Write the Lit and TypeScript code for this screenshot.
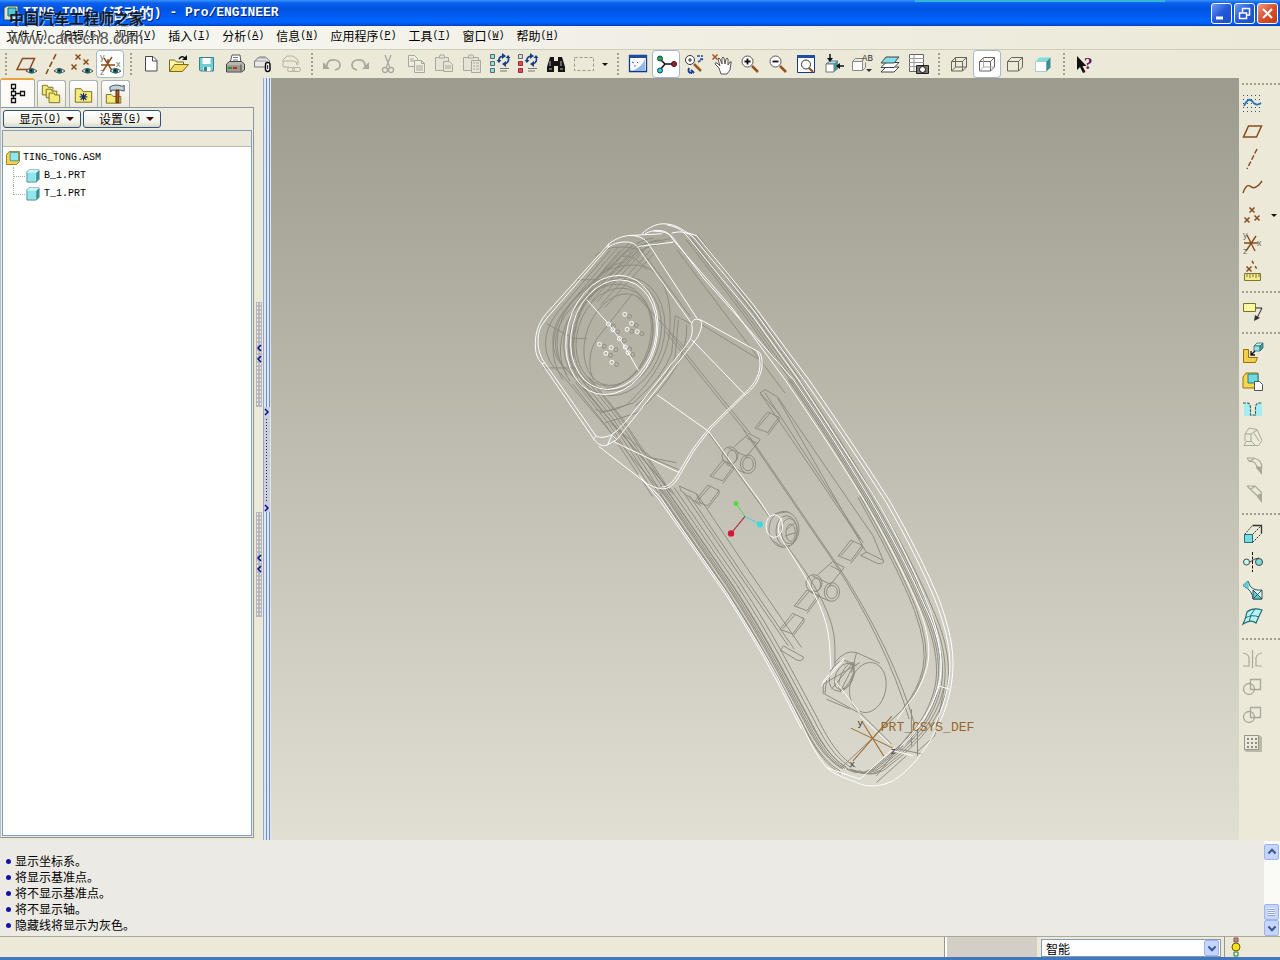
import { LitElement, html, css, svg } from "lit";
import { customElement, property } from "lit/decorators.js";
import { classMap } from "lit/directives/class-map.js";

const eye = svg`<g><path d="M14 21q5-5 11 0q-5 4-11 0z" fill="#dfe9e6" stroke="#59514a" stroke-width="1"/><circle cx="19.5" cy="20.8" r="2.6" fill="#17686c"/><circle cx="19.2" cy="20.4" r="1" fill="#012"/></g>`;
const cross = (x: number, y: number, c = "#8a4b1c") =>
  svg`<path d="M${x - 2.5} ${y - 2.5}l5 5m0-5l-5 5" stroke=${c} stroke-width="1.5" fill="none"/>`;
const cube = (x: number, y: number, s: number) =>
  svg`<g stroke="#35666c" stroke-width=".8"><path d="M${x} ${y + 3}l3-3h${s}l-3 3z" fill="#c4f6f8"/><path d="M${x} ${y + 3}h${s}v${s - 1}h-${s}z" fill="#8fe6ec"/><path d="M${x + s} ${y + 3}l3-3v${s - 1}l-3 3z" fill="#3f9da6"/></g>`;
const wireCube = svg`<path d="M6.500 11.500h11v9.500h-11zM6.500 11.500l4-4h11l-4 4M21.500 7.500v9.500l-4 4"/>`;
const sparkArrows = svg`<path d="M13 12q-1-5 4-6M22 7q2 5-3 7" fill="none" stroke="#16408c" stroke-width="1.600"/><path d="M16 3l4 3-4 3zM20 11l-4 3 4 3zM10.500 10h5l-2.500 3zM19.500 8h5l-2.500-3z" fill="#16408c"/><path d="M14 18.500h9M14 21h7" stroke="#777"/>`;

const icons: Record<string, unknown> = {
  planes: svg`<path d="M10.500 8.500h12l-5 11H5z" fill="none" stroke="#8a4b1c" stroke-width="1.500"/>${eye}`,
  axes: svg`<path d="M16 4L6 24" fill="none" stroke="#8a4b1c" stroke-width="1.600" stroke-dasharray="6 2.500"/>${eye}`,
  points: svg`${cross(10, 7)}${cross(18, 12)}${cross(6, 17)}${eye}`,
  csys: svg`<path d="M5 15h14M8 8l9 14M16 7L7 21M12 15v-6" fill="none" stroke="#8a4b1c" stroke-width="1.400"/><text x="4" y="10" font-size="9" class="g">y</text><text x="20" y="17" font-size="9" class="g">x</text><text x="4" y="25" font-size="9" class="g">z</text>${eye}`,
  new: svg`<path d="M8.500 6.500h7.500l4 4v10.500h-11.500z" fill="#fff" stroke="#4a4a4a"/><path d="M15.500 6.500v4.500h4.500" fill="none" stroke="#4a4a4a"/>`,
  open: svg`<path d="M4.500 21v-11h5l2 2h7v3" fill="#fff6a8" stroke="#776a21"/><path d="M4.500 21.500l5-7h14l-6 7z" fill="#f4dc62" stroke="#776a21"/><path d="M14 9q3-4 6-1" fill="none" stroke="#111" stroke-width="1.500"/><path d="M22 5v5h-5z" fill="#111"/>`,
  save: svg`<path d="M6.500 7.500h14v13.500h-13l-1-1z" fill="#6fcfd4" stroke="#3d8087"/><path d="M9.500 8h8v6h-8zM10.500 17h7v4h-7z" fill="#fff"/><path d="M11 17h3v4h-3z" fill="#3d8087"/>`,
  print: svg`<path d="M9 13l2-8h8l1 8z" fill="#fff" stroke="#555"/><path d="M12 7.500h5M12 10h5" stroke="#777"/><path d="M5.500 14l3-2.500h12l3 2.500v6l-3 2H5.500z" fill="#b9b8b0" stroke="#444"/><path d="M6 15h14v6H6z" fill="#9c9b96"/><path d="M7 18h4" stroke="#19a02a" stroke-width="2"/><path d="M12 18h4" stroke="#c22" stroke-width="2"/><path d="M20 14.500v7" stroke="#444"/>`,
  mail: svg`<path d="M5.500 17v-6l5-4h6l4 4v6z" fill="#e9e9e9" stroke="#777"/><path d="M6 11h11q3 0 3 4v2M8 8h9" fill="none" stroke="#999"/><rect x="16.500" y="12.500" width="4.500" height="9" rx="2.200" fill="#fff" stroke="#111" stroke-width="1.500"/><path d="M18.700 15v4" stroke="#111"/>`,
  mailLink: svg`<g fill="none" stroke="#b3b0a4"><path d="M6 17v-7l4-4h6l5 4v5M6 17h6M6 11h11q3 0 3 4"/><rect x="10.500" y="17.500" width="7" height="4" rx="2"/><rect x="15.500" y="17.500" width="8" height="4" rx="2"/></g>`,
  undo: svg`<path d="M9 16q0-7 8-6q5 1 5 5t-5 5" fill="none" stroke="#aaa89c" stroke-width="1.700"/><path d="M5 12v7h7z" fill="#aaa89c"/>`,
  redo: svg`<path d="M19 16q0-7-8-6q-5 1-5 5t5 5" fill="none" stroke="#aaa89c" stroke-width="1.700"/><path d="M23 12v7h-7z" fill="#aaa89c"/>`,
  cut: svg`<g fill="none" stroke="#aaa89c" stroke-width="1.300"><path d="M11 5l5 13M17 5l-5 13"/><circle cx="11" cy="20" r="2.500"/><circle cx="17" cy="20" r="2.500"/></g>`,
  copy: svg`<g fill="#efede1" stroke="#aaa89c"><path d="M6.500 5.500h6l3 3v8h-9z"/><path d="M12.500 10.500h7l3 3v9h-10zM19.500 10.500v3h3M14 16h7M14 18h7M14 20h7M8 9h4M8 11h4"/></g>`,
  paste: svg`<g fill="#e7e4d7" stroke="#aaa89c"><path d="M5.500 7.500h13v13h-13z"/><path d="M9 8l1-3h4l1 3z"/><path d="M13.500 11.500h6l3 3v7h-9zM15 16h6M15 18h6"/></g>`,
  pasteSpecial: svg`<g fill="#e7e4d7" stroke="#aaa89c"><path d="M5.500 7.500h15v13h-15z"/><path d="M10 8l1-3h4l1 3z"/><path d="M13.500 10.500h9v12h-9zM15 13h2M18 13h3M15 16h2M18 16h3M15 19h2M18 19h3"/></g>`,
  regen: svg`<g fill="#8de2df" stroke="#567"><path d="M4.500 4.500h4v4h-4zM4.500 11.500h4v4h-4zM4.500 18.500h4v4h-4z"/></g>${sparkArrows}`,
  regenAll: svg`<path d="M4.500 4.500h4v4h-4z" fill="#ddd" stroke="#666"/><path d="M4.500 11.500h4v4h-4zM4.500 18.500h4v4h-4z" fill="#e04a4a" stroke="#834"/>${sparkArrows}`,
  find: svg`<path d="M8 7h4v4h4V7h4l3 10v5h-7v-6h-4v6H5v-5z" fill="#151515"/><path d="M8 11v5M19 11v5M7 19h3M18 19h3" stroke="#bbb"/>`,
  select: svg`<rect x="4.500" y="7.500" width="19" height="13" fill="none" stroke="#999789" stroke-dasharray="3 2"/>`,
  refresh: svg`<path d="M5.500 5.500h17v16h-17z" fill="#fff" stroke="#123a86" stroke-width="1.300"/><path d="M5 5h18v3H5z" fill="#1d4fa0"/><path d="M8 21Q18 17 21 9v12z" fill="#8eb9ea"/><path d="M8 12l2 1M10 16l2 0M13 12l2 2" stroke="#2b5cad"/><path d="M12 17l7-7" stroke="#fff" stroke-width="2"/>`,
  spin: svg`<path d="M8 9l5 5h11M13 14l-5 6" fill="none" stroke="#111" stroke-width="1.500"/><circle cx="8" cy="8.500" r="2.500" fill="#27a844" stroke="#145"/><circle cx="22" cy="14" r="2.500" fill="#9d1f25" stroke="#411"/><circle cx="8" cy="20.500" r="2.500" fill="#34c5d4" stroke="#145"/>`,
  orient: svg`<circle cx="10" cy="10" r="4.500" fill="#fff" stroke="#333"/><path d="M10 8v4M8 10h4" stroke="#333"/><path d="M14 14l7 7" stroke="#9a5726" stroke-width="2.500"/><path d="M17 6h6M20 9h4M18 12l5-3" stroke="#1e4e9c" stroke-dasharray="3 1" stroke-width="1.500"/><path d="M9 18q-2 5 3 5m-1-3l3 3" fill="none" stroke="#1c3c9c" stroke-width="2"/>`,
  pan: svg`${cross(7, 7, "#a35624")}<path d="M11 18l-4-4q0-2 2-1l3 3-2-7q1-2 2 0l2 5V8q1-2 2 0l1 6 1-5q1-2 2 0l0 6 2-3q2-1 1 1l-1 7-3 4h-6z" fill="#fff" stroke="#444" stroke-width=".9"/>`,
  zoomIn: svg`<circle cx="11.500" cy="11.500" r="5.500" fill="#fff" stroke="#555"/><path d="M11.500 8.500v6M8.500 11.500h6" stroke="#111" stroke-width="1.800"/><path d="M16 16l6 6" stroke="#96501e" stroke-width="2.500"/>`,
  zoomOut: svg`<circle cx="11.500" cy="11.500" r="5.500" fill="#fff" stroke="#555"/><path d="M8.500 11.500h6" stroke="#111" stroke-width="1.800"/><path d="M16 16l6 6" stroke="#96501e" stroke-width="2.500"/>`,
  refit: svg`<path d="M5.500 5.500h17v17h-17z" fill="#fff" stroke="#123a86"/><path d="M5 5h18v3H5z" fill="#1d4fa0"/><circle cx="14" cy="14.500" r="4.500" fill="#fff" stroke="#333"/><path d="M17 18l4 4" stroke="#96501e" stroke-width="2.300"/>`,
  reorient: svg`<path d="M6 14l4-3h8l-4 3z" fill="#a4e6ea" stroke="#679"/><path d="M6 14h8v8H6z" fill="#fff" stroke="#777"/><path d="M14 14l4-3v8l-4 3z" fill="#4c949b"/><path d="M10 4v4M24 16h-5" stroke="#111" stroke-width="1.500"/><path d="M7 8h6l-3 4zM20 13v6l-4-3z" fill="#111"/>`,
  saved: svg`<path d="M4.500 11.500h10v9h-10z" fill="#fff" stroke="#888"/><path d="M4.500 11.500l3-3h8M14.500 20.500l3-3v-5" fill="none" stroke="#888"/><text x="14" y="11" font-size="9" class="m">AB</text><path d="M18 19h6l-3 3z" fill="#333"/>`,
  layers: svg`<g stroke="#444" stroke-width="1"><path d="M5 22l5-5h13l-5 5z" fill="#fff"/><path d="M5 17.500l5-5h13l-5 5z" fill="#fff"/><path d="M5 13l5-6h13l-5 6z" fill="#7ee0e6"/></g>`,
  viewMgr: svg`<path d="M5.500 4.500h14v17h-14z" fill="#fff" stroke="#666"/><path d="M5 8.500h15M5 12.500h15M5 16.500h15M10 5v16" stroke="#999"/><path d="M12.500 15.500h12v8h-12z" fill="#77756c" stroke="#222"/><circle cx="18.500" cy="19.500" r="3" fill="#fff" stroke="#111"/>`,
  wire: svg`<g fill="none" stroke="#66645c">${wireCube}<path d="M10.500 7.500v9.500h11M10.500 17l-4 4"/></g>`,
  hidden: svg`<g fill="none" stroke="#66645c">${wireCube}<path d="M10.500 7.500v9.500h11M10.500 17l-4 4" stroke="#aaa"/></g>`,
  noHidden: svg`<g fill="none" stroke="#66645c">${wireCube}</g>`,
  shaded: svg`<path d="M6.500 11.500l4-4h11l-4 4z" fill="#7be0e2"/><path d="M6.500 11.500h11v10h-11z" fill="#fff" stroke="#aacdd0"/><path d="M17.500 11.500l4-4v10l-4 4z" fill="#3d8d92"/>`,
  help: svg`<path d="M7 6v14l3-3 3 6 2.500-1-3-6h4z" fill="#111"/><text x="14" y="19" font-size="17" font-weight="700" fill="#5d1660" font-family="Liberation Serif">?</text>`,
  sketch: svg`<g fill="#334f7c">${[6, 10, 14, 18, 22].map((y) => [4, 8, 12, 16, 20].map((x) => svg`<rect x=${x} y=${y} width="1" height="1"/>`))}</g><path d="M5 17q4-9 8-5q4 6 9 2" fill="none" stroke="#2474b8" stroke-width="1.800"/>`,
  plane: svg`<path d="M9.500 9h13l-5 11H4.500z" fill="none" stroke="#8a4b1c" stroke-width="1.500"/>`,
  axis: svg`<path d="M18 4L8 24" fill="none" stroke="#8a4b1c" stroke-width="1.500" stroke-dasharray="5 2"/>`,
  curve: svg`<path d="M4 20q3-9 7-7q5 5 12-5" fill="none" stroke="#8a4b1c" stroke-width="1.400"/>`,
  point: svg`${cross(13, 9)}${cross(8, 19)}${cross(18, 17)}`,
  csys2: svg`<path d="M5 14h14M8 6l8 16M17 7L7 22" fill="none" stroke="#8a4b1c" stroke-width="1.400"/><text x="4" y="9" font-size="9" class="g">y</text><text x="18" y="17" font-size="9" class="g">x</text><text x="4" y="25" font-size="9" class="g">z</text>`,
  analysis: svg`${cross(10, 12)}<path d="M13 4l6 10" stroke="#8a4b1c" stroke-width="1.500" stroke-dasharray="3 3"/><path d="M5.500 16.500h16v7h-16z" fill="#f5ed8d" stroke="#7c7637"/><path d="M8 17v3M11 17v4M14 17v3M17 17v4M20 17v3" stroke="#7c7637"/>`,
  note: svg`<path d="M4.500 5.500h12v8h-12z" fill="#fbf8a4" stroke="#75732c"/><path d="M17 10h6l-5 10" fill="none" stroke="#222"/><path d="M15 23l1-6 5 3z" fill="#333"/>`,
  assemble: svg`<path d="M4.500 10.500h5v8h9l-2 5h-12z" fill="#f3cf49" stroke="#927110"/>${cube(15, 4, 6)}<path d="M16 12l-4 4m0-4v4h4" fill="none" stroke="#111" stroke-width="1.300"/>`,
  create: svg`<path d="M4 10l3-4h12v12l-3 3H4z" fill="#f6d64f" stroke="#927110"/><path d="M9 7h10v9H9z" fill="#6cdbe0" stroke="#2b7d85"/><path d="M15.500 14.500h5l3 3v6h-8z" fill="#fff" stroke="#555"/>`,
  hole: svg`<path d="M5 8h5l2 4v8h4v-8l2-4h5v13H5z" fill="#a4edf4"/><path d="M4 8h5q2.500 1 2.500 5v7h5v-7q0-4 2.500-5h4" fill="none" stroke="#455" stroke-width="1.100" stroke-dasharray="3 1"/>`,
  shell: svg`<path d="M6 11l4-6 8 1.500 5 11-3.500 5H5l2-4h6M6 11h6v7M6 11v7M12 11l6-4M12 18l4 4M15 10l5 8" fill="none" stroke="#aaa89c"/>`,
  round: svg`<path d="M8 7h6.500q8 1.500 8.500 9.500M10.500 10.500q7-1 7.500 7.500M8 7l2.500 3.500L16 7" fill="none" stroke="#aaa89c" stroke-width="1.200"/><path d="M18 15l5 1v8l-5-6z" fill="#aaa89c"/>`,
  chamfer: svg`<path d="M8 7h8l7 7M8 7l3.500 3.500 6.500 6M11.500 10.500L16 7" fill="none" stroke="#aaa89c" stroke-width="1.200"/><path d="M18 16l5-2v10l-5-6z" fill="#aaa89c"/>`,
  extrude: svg`<path d="M5.500 14.500h8v8h-8z" fill="#73dde2" stroke="#26727a"/><path d="M5.500 14.500l8-9M13.500 14.500l9-9M13.500 22.500l9-9" fill="none" stroke="#333" stroke-dasharray="2 1"/><path d="M13.500 5.500h9v8" fill="none" stroke="#333" stroke-width="1.300"/>`,
  revolve: svg`<circle cx="7.500" cy="14" r="3" fill="#c8f7f9" stroke="#444"/><circle cx="20" cy="14" r="3.500" fill="#73dde2" stroke="#444"/><path d="M13.500 4v20" stroke="#111" stroke-dasharray="3 1.500"/><path d="M11 14l5-3 4-1" fill="none" stroke="#444"/>`,
  sweep: svg`<path d="M4 9.500l5-4.500 2 5q4 5 12 4v9H14q0-8-10-13.500z" fill="#dff3f4" stroke="#355"/><path d="M14 14l9 9h-9z" fill="#5ccfd8" stroke="#355"/><path d="M4 9.500L9 5l1 8z" fill="#5ccfd8"/><path d="M23 14l-9 9" stroke="#355"/>`,
  boundary: svg`<path d="M4 20q3-6 4-12 6-5 15-2-3 6-6 13-5-4-13 1z" fill="#b5f3f6" stroke="#256c75" stroke-width="1.200"/><path d="M6 14q7-4 14-1M16 5q-5 5-6 13" fill="none" stroke="#256c75"/>`,
  mirror: svg`<path d="M13.500 5v18M4 8q7 1 6 8v5H4M23 8q-7 1-6 8v5h6" fill="none" stroke="#aaa89c" stroke-width="1.200"/>`,
  merge: svg`<g fill="none" stroke="#aaa89c" stroke-width="1.300"><path d="M11.500 6.500h10v10h-10z"/><circle cx="10" cy="16" r="5.500"/></g>`,
  pattern: svg`<path d="M5 6h15l3 2v15H7l-2-2z" fill="#bbb8ab"/><path d="M5.500 6.500h14v14h-14z" fill="#ebe8dc" stroke="#99978a"/><g fill="#8e8c81">${[9, 13, 17].map((y) => [8, 12, 16].map((x) => svg`<rect x=${x} y=${y} width="2" height="2"/>`))}</g>`,
  tree: svg`<g fill="#fff" stroke="#111" stroke-width="1.300"><path d="M9.500 7v14M9.500 13.500h8"/><path d="M7.500 4.500h4v4h-4zM7.500 11.500h4v4h-4zM7.500 18.500h4v4h-4zM16.500 11.500h4v4h-4z"/></g>`,
  folders: svg`<g fill="#f6eb79" stroke="#77702a"><path d="M4.500 15v-10h5l1 2h5v8z"/><path d="M8.500 18v-9h5l1 2h5v7z"/><path d="M11.500 23v-10h5l1 2h5v8z"/></g>`,
  favorites: svg`<path d="M5.500 22.500v-14h6l2 3h9v11z" fill="#f6eb79" stroke="#77702a"/><path d="M14 13v8M10 17h8M11 14l6 6M17 14l-6 6" stroke="#15306f" stroke-width="1.200"/>`,
  utils: svg`<path d="M4.500 23.500v-9h5l2 2h8v7z" fill="#f6eb79" stroke="#77702a"/><path d="M8 7q5-4 13-1l2-1v6l-4-1H10l-1 2z" fill="#c4d1d9" stroke="#3e5260"/><path d="M14.500 10h3v13h-3z" fill="#a95a21" stroke="#562706"/>`,
  up: svg`<path d="M9 16l5-5 5 5" fill="none" stroke="#3c5a94" stroke-width="3"/>`,
  down: svg`<path d="M9 12l5 5 5-5" fill="none" stroke="#3c5a94" stroke-width="3"/>`,
};

@customElement("tool-icon")
class ToolIcon extends LitElement {
  static styles = css`
    :host { display: block; width: 28px; height: 28px; }
    svg { display: block; width: 100%; height: 100%; }
    .g { fill: #6f6f6a; font-family: "Liberation Sans", sans-serif; }
    .m { fill: #333; font-family: "Liberation Mono", monospace; }
  `;
  @property() name = "";
  render() {
    return html`<svg viewBox="0 0 28 28" aria-hidden="true">${icons[this.name]}</svg>`;
  }
}

/* Parallel copies of one edge, each shifted by an offset. */
const bundle = (d: string, offsets: number[][]) =>
  offsets.map(([x, y]) => svg`<path d=${d} transform="translate(${x} ${y})"/>`);

const holes = [[314, 314], [334, 341], [321, 359], [351, 366], [265, 343], [278, 360], [298, 387], [315, 412], [324, 429], [238, 404], [273, 414], [257, 431], [275, 458]];

@customElement("model-view")
class ModelView extends LitElement {
  static styles = css`
    :host { display: block; flex: 1; min-width: 0; background: linear-gradient(#9d9a8e, #c1bfb3 52%, #e1dfd3); overflow: hidden; }
    svg { display: block; width: 100%; height: 100%; }
    path, ellipse, circle { vector-effect: non-scaling-stroke; }
    .hid { fill: none; stroke: #8f8d82; stroke-width: 1; }
    .vis { fill: none; stroke: #fff; stroke-width: 1; }
    .datum { fill: none; stroke: #a06a2a; stroke-width: 1; }
    .label { font: 13px "Liberation Mono", monospace; fill: #96662e; }
    .axis { font: 10px "Liberation Sans", sans-serif; fill: #3c3a30; }
  `;
  render() {
    return html`<svg viewBox="271 78 968 763" role="img" aria-label="TING_TONG">
      <g transform="translate(520 210) scale(.33333)" class="hid">
        ${bundle("M270 122L110 310C85 345 70 380 78 425C85 455 100 475 120 490L430 855", [[0, 0], [22, -8], [30, 0]])}
        ${bundle("M190 500L290 625L430 838", [[0, 0], [-9, 6], [-16, 12], [10, 0], [18, 4], [-24, 18], [-32, 24]])}
        ${bundle("M420 90C380 95 345 115 300 165C230 225 180 265 150 320C125 380 120 440 160 500", [[0, 0], [-20, -5], [-32, 10], [-10, 16], [14, 6]])}
        ${bundle("M340 100L190 265", [[0, 0], [12, 5], [24, 10], [40, 12], [52, 20], [64, 28], [-14, 0]])}
        <path d="M170 210h85M80 342l80 45h40M68 475h100M250 185q120-45 165 15q40 55 35 150q-5 120-130 235q-55 30-95 15"/>
        <path d="M355 118q-90-20-130 20M300 140q40-10 80 40M160 460q-10-80 30-180t120-125"/>
        <ellipse cx="295" cy="380" rx="135" ry="182" transform="rotate(17 295 380)"/>
        <ellipse cx="292" cy="376" rx="128" ry="170" transform="rotate(17 292 376)"/>
        <ellipse cx="283" cy="382" rx="112" ry="150" transform="rotate(17 283 382)"/>
        <ellipse cx="295" cy="390" rx="98" ry="142" transform="rotate(20 295 390)"/>
        <ellipse cx="270" cy="380" rx="120" ry="160" transform="rotate(17 270 380)"/>
        <path d="M335 255L240 375C200 420 205 480 220 510M350 260L500 420M465 318L455 430Q430 500 340 580L240 610M465 318L518 345M500 345q5 130-150 265l-95 30M475 330l-10 110q-20 65-120 150"/>
        <path d="M355 110L510 320M380 100L460 85M470 120L795 550M545 345L715 448M380 740L475 780M420 830L445 830M270 640L395 745L470 760"/>
        ${bundle("M435 365L550 510L680 670", [[0, 0], [10, 0]])}
        ${bundle("M520 75L700 310L842 510", [[0, 0], [-8, 8], [-16, 10], [-22, 14], [12, 0]])}
        ${holes.map(([x, y]) => svg`<circle cx=${x + 14} cy=${y + 6} r="6"/>`)}
      </g>
      <g transform="translate(660 380) scale(.33333)" class="hid">
        ${bundle("M0 328L200 618C300 770 360 890 430 1020C470 1100 500 1140 545 1168", [[0, 0], [5, 1], [10, 0], [14, -4], [20, 2], [-4, 8], [-2, 16], [30, -2], [42, -4]])}
        ${bundle("M70 338L220 560L385 800", [[0, 0], [18, 10], [40, 5]])}
        <path d="M58 320l50 22 15 32M58 320l5 15 60 45M370 800l60 33q2 14-18 10l-50-30z"/>
        <path d="M300 40l15-10 38 22L640 470l32 78q-10 8-20 4l-50-24 18-10 48 24M300 40L600 480M315 40L610 490M353 55L620 520M300 40l60 65"/>
        ${bundle("M250 150L520 545Q680 790 748 1020", [[0, 0], [18, 20]])}
        ${bundle("M385 0C465 115 535 225 610 350C690 485 745 595 785 690C835 800 835 880 825 925C800 1030 735 1090 660 1150Q610 1200 560 1170", [[0, 0], [6, 0], [12, 0], [18, 2], [26, 4], [36, 4]])}
        ${bundle("M600 350C680 490 740 610 770 690Q810 800 795 865Q780 930 735 985", [[0, 0], [-6, 4]])}
        ${[[285, 145], [150, 290], [105, 365], [535, 530], [403, 680], [360, 750]].map(([x, y]) => svg`<path d="M${x} ${y}l38-48 34 16-34 46zM${x + 8} ${y - 1}l38-44M${x + 66} ${y - 35}l6 3v10l-34 44"/>`)}
        ${[[0, 0], [252, 384]].map(([x, y]) => svg`<g transform="translate(${x} ${y})"><path d="M222 202l45-40 34 18-48 60M260 175l34 18M205 205l55 26M200 255l55 26"/><ellipse cx="210" cy="228" rx="24" ry="26"/><ellipse cx="216" cy="232" rx="14" ry="20"/><ellipse cx="264" cy="254" rx="23" ry="28"/><ellipse cx="264" cy="254" rx="16" ry="20"/></g>`)}
        <ellipse cx="372" cy="450" rx="45" ry="54"/><ellipse cx="388" cy="455" rx="24" ry="38"/><ellipse cx="380" cy="455" rx="32" ry="46"/><ellipse cx="392" cy="460" rx="14" ry="26"/>
        <path d="M345 402l40-5M340 485l30 20M365 480q160 200 160 320v60M145 160l185 255M380 450l25-20M375 470l30-10"/>
        <ellipse cx="624" cy="925" rx="54" ry="76" transform="rotate(12 624 925)"/>
        <ellipse cx="545" cy="890" rx="35" ry="48" transform="rotate(25 545 890)"/><ellipse cx="553" cy="892" rx="26" ry="42" transform="rotate(25 553 892)"/><ellipse cx="560" cy="890" rx="16" ry="44" transform="rotate(25 560 890)"/>
        <path d="M525 850q30-40 65-30l70 32M500 900l-5 45 100 55M500 960l70 30M590 820l-15 60M600 850l-110 65v30M515 930l65-80M540 940l45-90M560 850l30 10"/>
        <path d="M600 1000l95 95M735 985l-190 180M760 1050L650 1190M855 920l-30 150-55 50M755 990v110M773 1040v90M718 1110l70 15M720 1105l45-30M740 1130l-90 80"/>
      </g>
      <g transform="translate(520 210) scale(.33333)" class="vis">
        <path d="M268 100C290 85 310 78 330 77C360 78 375 88 385 102L530 325M268 100L75 315C55 340 45 370 45 402C45 430 50 445 65 462L220 688C235 708 250 712 262 706L290 690L520 400C540 375 548 350 543 335C538 325 518 325 515 342C519 370 515 385 500 405L330 620C310 645 290 665 275 675C255 685 240 685 228 680L70 455C50 425 48 380 62 350L80 325L262 115C280 98 310 95 325 97C345 100 355 112 360 124L515 342"/>
        <path d="M268 100l-6 14M65 462l8-2M220 688l8-8M262 706l14-32M290 690l-14-12"/>
        <path d="M330 77L425 72M365 72C390 50 410 42 430 42C465 42 485 58 500 68L530 78L700 285L867 510M375 72C400 58 425 60 440 68C452 75 455 88 465 97L640 300L795 510M355 110L460 97M400 64q40 0 55 15L550 205L820 510M455 70C490 60 510 72 525 88L700 300L852 510M440 45q40 8 56 28L700 322L836 510"/>
        <ellipse cx="275" cy="376" rx="135" ry="182" transform="rotate(15 275 376)"/>
        <ellipse cx="280" cy="375" rx="126" ry="167" transform="rotate(15 280 375)"/>
        <path d="M200 270L265 343L298 387L325 430L355 483M530 328L545 332L718 428C729 440 729 480 718 500C710 525 690 545 670 560L575 655C560 675 530 710 515 735L480 795C465 825 445 840 425 838C400 835 385 825 370 815L235 710M712 428C722 440 723 480 712 500C704 522 684 542 664 560L570 652C555 672 525 706 508 735L474 792C460 818 442 834 425 832"/>
        <path d="M515 390L675 555M410 555L565 665L718 872L750 922M282 697L478 790M355 795L420 875M365 812L420 862"/>
        ${holes.map(([x, y]) => svg`<circle cx=${x} cy=${y} r="6"/>`)}
      </g>
      <g transform="translate(660 380) scale(.33333)" class="vis">
        <path d="M447 0C540 135 610 240 690 365C750 470 800 570 838 660C865 735 885 810 879 880C872 960 850 1010 830 1050C790 1130 740 1180 700 1205C660 1225 620 1225 590 1210C560 1200 520 1185 500 1165C470 1130 450 1090 430 1045L350 890C300 800 250 720 200 640L60 440L0 352"/>
        <path d="M432 0C530 140 600 245 680 370C740 475 790 575 825 660C855 735 875 810 870 880C862 955 840 1010 820 1045M0 365L60 450L200 650C250 730 300 810 345 895L425 1050"/>
        <path d="M375 0C450 110 525 220 605 350C685 485 735 590 775 680C812 770 812 830 800 870C785 920 765 950 740 980L712 1020M400 0C480 115 550 225 625 350C705 485 755 590 795 680C850 790 850 870 835 920C820 980 790 1030 720 1105"/>
        <path d="M416 0L640 345C710 460 770 590 810 690C850 800 850 880 835 930Q800 1030 730 1100M835 920l35 10M700 1115l60 15M705 1105L600 1200L540 1180L500 1165"/>
        <path d="M365 480C430 580 480 660 500 740C512 790 510 830 513 870M485 920l8-18 60-66M490 912l62-70M525 905L600 1000M600 1010l90 85"/>
        <ellipse cx="343" cy="440" rx="25" ry="34"/><path d="M365 415q-20 30 0 65"/>
      </g>
      <path d="M745 517L736 504" stroke="#5fd84e"/><path d="M745 517L760 525" stroke="#3bd7df"/><path d="M745 517L731 534" stroke="#a82a3c"/>
      <circle cx="736" cy="504" r="2.500" fill="#4fdc42"/><circle cx="760" cy="525" r="3" fill="#35dbe4"/><circle cx="731" cy="534" r="3.200" fill="#d9143a"/>
      <path class="datum" d="M851 729L893 749M862 722L884 757M853 762L892 717"/>
      <text class="axis" x="858" y="727">y</text><text class="axis" x="891" y="755">z</text><text class="axis" x="850" y="768">x</text>
      <text class="label" x="881" y="732">PRT_CSYS_DEF</text>
    </svg>`;
  }
}

type Tool = [string, string, boolean?];
const topGroups: Tool[][] = [
  [["planes", "基准平面"], ["axes", "基准轴"], ["points", "基准点"], ["csys", "坐标系", true]],
  [["new", "新建"], ["open", "打开"], ["save", "保存"], ["print", "打印"], ["mail", "发送"], ["mailLink", "发送链接"]],
  [["undo", "撤消"], ["redo", "重做"], ["cut", "剪切"], ["copy", "复制"], ["paste", "粘贴"], ["pasteSpecial", "选择性粘贴"], ["regen", "再生"], ["regenAll", "再生管理器"], ["find", "查找"], ["select", "选取"]],
  [["refresh", "重画"], ["spin", "旋转中心", true], ["orient", "定向模式"], ["pan", "平移"], ["zoomIn", "放大"], ["zoomOut", "缩小"], ["refit", "重新调整"], ["reorient", "重定向"], ["saved", "视图列表"], ["layers", "层"], ["viewMgr", "视图管理器"]],
  [["wire", "线框"], ["hidden", "隐藏线", true], ["noHidden", "无隐藏线"], ["shaded", "着色"]],
  [["help", "上下文帮助"]],
];
const sideGroups: Tool[][] = [
  [["sketch", "草绘"], ["plane", "平面"], ["axis", "轴"], ["curve", "曲线"], ["point", "点"], ["csys2", "坐标系"], ["analysis", "分析"]],
  [["note", "注释"]],
  [["assemble", "装配"], ["create", "创建"], ["hole", "孔"], ["shell", "壳"], ["round", "倒圆角"], ["chamfer", "倒角"]],
  [["extrude", "拉伸"], ["revolve", "旋转"], ["sweep", "扫描"], ["boundary", "边界混合"]],
  [["mirror", "镜像"], ["merge", "合并"], ["merge", "修剪"], ["pattern", "阵列"]],
];
const menus = [["文件", "F"], ["编辑", "E"], ["视图", "V"], ["插入", "I"], ["分析", "A"], ["信息", "N"], ["应用程序", "P"], ["工具", "T"], ["窗口", "W"], ["帮助", "H"]];
const messages = ["显示坐标系。", "将显示基准点。", "将不显示基准点。", "将不显示轴。", "隐藏线将显示为灰色。"];

@customElement("app-root")
class AppRoot extends LitElement {
  static styles = css`
    :host { display: flex; flex-direction: column; height: 100vh; min-height: 800px; background: #ece9d8; color: #000; font: 12px/16px "Noto Sans CJK SC", sans-serif; }
    * { box-sizing: border-box; }
    button { font: inherit; color: inherit; padding: 0; border: 0; background: none; display: flex; align-items: center; flex: none; }
    ul { list-style: none; margin: 0; padding: 0; }
    .lat { font: 10px/16px "Liberation Mono", monospace; }
    .title { position: relative; height: 26px; flex: none; display: flex; align-items: center; padding: 0 2px 0 3px; background: linear-gradient(#35b5d6, #35b5d6) right 115px top / 250px 2px no-repeat, linear-gradient(#3a93ff, #0a5fee 12%, #0053e1 35%, #0062fb 75%, #0062fb 88%, #003fc0); color: #fff; }
    .app { width: 16px; height: 16px; flex: none; margin-right: 4px; }
    .title h1 { margin: 0; flex: 1; display: flex; align-items: center; font: bold 13px/24px "Liberation Mono", monospace; text-shadow: 1px 1px #02206e; white-space: pre; }
    .title h1 span { font: bold 15px/24px "Noto Sans CJK SC", sans-serif; }
    .mark { position: absolute; z-index: 2; left: 9px; top: 7px; pointer-events: none; white-space: nowrap; }
    .mark b { display: block; font: bold 15px/22px "Noto Sans CJK SC", sans-serif; color: #111b2c; text-shadow: 1px 1px #8cb8ee; }
    .mark i { display: block; font: 16px/20px "Liberation Sans", sans-serif; color: #55534f; text-shadow: 1px 1px #fff; }
    .win { width: 21px; height: 21px; margin-left: 2px; border: 1px solid #fff; border-radius: 3px; background: linear-gradient(135deg, #6f9cf4, #2358d8 50%, #1d4fc8); }
    .win.close { background: linear-gradient(135deg, #f09b82, #d9512c 50%, #c33c1a); }
    .win svg { width: 19px; height: 19px; }
    .menu { height: 24px; flex: none; display: flex; gap: 12px; padding: 2px 6px; background: linear-gradient(90deg, #f8f8f4, #f1efe5 50%, #ece9d8); border-bottom: 1px solid #cfccba; }
    .menu button { height: 16px; }
    .tools { height: 28px; flex: none; display: flex; }
    .handle { width: 13px; flex: none; background: radial-gradient(circle, #a3a091 1px, transparent 1px) 50% 0 / 4px 4px repeat-y; margin: 2px 0; }
    .tools .handle:first-child { width: 12px; }
    .tool { width: 28px; height: 28px; }
    .tool.on { background: #fff; box-shadow: inset 0 0 0 1px #a5b8c8; border-radius: 4px; }
    .drop { width: 13px; justify-content: center; }
    .drop::before, .pill::after { content: ""; border: 4px solid transparent; border-top-color: #111; border-bottom: 0; }
    .drop::before { border-width: 3px 3px 0; }
    .main { flex: 1; min-height: 0; display: flex; }
    .left { width: 254px; flex: none; display: flex; flex-direction: column; padding-bottom: 2px; }
    .tabs { display: flex; gap: 3px; height: 29px; flex: none; align-items: flex-end; }
    .tab { width: 29px; height: 27px; justify-content: center; border: 1px solid #a8b0b4; border-bottom: 0; border-radius: 3px 3px 0 0; background: linear-gradient(#fff, #ebe8da); }
    .tab.on { width: 35px; height: 29px; background: #fbfaf6; border-top: 2px solid #eaa33c; margin-right: -1px; }
    .panel { flex: 1; min-height: 0; border: 1px solid #8797a5; border-left-color: #b8c2ca; padding: 2px 1px 1px; display: flex; flex-direction: column; background: #efecdf; }
    .pills { display: flex; gap: 2px; padding-left: 1px; height: 20px; flex: none; }
    .pill { width: 78px; height: 18px; border: 1px solid #2a5379; border-radius: 3px; background: linear-gradient(#fff, #f2f1e8 70%, #dcd8c8); justify-content: flex-end; padding-right: 6px; }
    .pill::after { margin-left: 5px; border-top-color: #3c0c0c; }
    .tree { flex: 1; border: 1px solid #7f9db9; background: #fff; }
    .head { height: 16px; background: #ebe8d9; border-bottom: 1px solid #bdb9a5; margin-bottom: 2px; }
    .tree li { display: flex; align-items: center; gap: 3px; height: 18px; padding-left: 3px; }
    .tree li svg { width: 14px; height: 14px; flex: none; }
    .tree li.kid { padding: 0 0 0 10px; gap: 0; }
    .kid::before { content: ""; width: 12px; height: 18px; border-left: 1px dotted #aaa; background: linear-gradient(90deg, #aaa 50%, transparent 50%) 0 9px / 2px 1px repeat-x; }
    .kid.last::before { height: 10px; align-self: flex-start; }
    .kid span { margin-left: 4px; }
    .sash { width: 10px; flex: none; display: flex; flex-direction: column; align-items: center; justify-content: center; gap: 105px; border-right: 1px solid #93a8cc; }
    .grip { width: 6px; height: 105px; color: #10108c; background: radial-gradient(circle, #eee 1px, #b8b8bc 1px) 0 0 / 3px 4px; justify-content: center; }
    .grip svg { width: 6px; height: 20px; }
    .split { width: 7px; flex: none; display: flex; align-items: center; background: linear-gradient(90deg, #dfe7f5 2px, #6f8dc4 2px 3px, #dfe7f5 3px 5px, #6f8dc4 5px 6px, #dfe7f5 6px); }
    .split button { width: 6px; height: 105px; background: #ccd0dc; }
    .split svg { width: 6px; height: 105px; }
    .side { width: 41px; flex: none; }
    .side .handle { width: auto; height: 13px; margin: 0 0 0 2px; background: radial-gradient(circle, #a3a091 1px, transparent 1px) 0 50% / 4px 4px repeat-x; }
    .side .handle:first-child { height: 11px; }
    .row { display: flex; }
    .log { flex: none; display: flex; background: #ebeae4; border-top: 1px solid #ece9d8; border-bottom: 1px solid #aaa799; }
    .log ul { flex: 1; padding: 12px 0 3px 6px; }
    .log li { display: flex; align-items: center; gap: 4px; height: 16px; }
    .log li::before { content: ""; width: 5px; height: 5px; border-radius: 50%; background: #1414a8; }
    .bar { width: 16px; display: flex; flex-direction: column; background: #fafaf6; padding-top: 3px; }
    .bar button, .arrow { width: 15px; height: 16px; border: 1px solid #9db5ea; border-radius: 2px; background: #c6d5fb; overflow: hidden; justify-content: center; }
    .bar .thumb { margin-top: auto; background: repeating-linear-gradient(#eef3ff 0 1px, #8ca5dc 1px 2px) 50% / 7px 8px no-repeat, #c6d5fb; }
    .bar tool-icon, .arrow tool-icon { width: 20px; height: 20px; flex: none; }
    .status { height: 23px; flex: none; display: flex; justify-content: flex-end; border-bottom: 3px solid #4377bd; padding-right: 36px; }
    .cell { width: 94px; border-left: 1px solid #999687; background: #d3cfc7; border-right: 1px solid #ece9d8; box-shadow: inset 2px 0 #fff; }
    .pick { position: relative; width: 180px; margin: 2px 3px 0; }
    .pick select { appearance: none; width: 100%; height: 18px; display: block; border: 1px solid #7f9db9; border-radius: 0; background: #fff; font: inherit; line-height: 15px; padding: 0 4px; color: #000; }
    .arrow { position: absolute; right: 2px; top: 1px; display: flex; align-items: center; pointer-events: none; }
    .light { border-left: 1px solid #999687; padding-left: 5px; width: 20px; }
    .light svg { width: 13px; height: 20px; display: block; }
  `;

  private tool([name, label, on]: Tool) {
    return html`<button class=${classMap({ tool: true, on: !!on })} aria-label=${label}><tool-icon name=${name}></tool-icon></button>`;
  }

  private part(asm: boolean) {
    return html`<svg viewBox="0 0 15 15" aria-hidden="true">${asm
      ? svg`<path d="M.5 4l3-3.500h11v10.500l-3 3.500h-11z" fill="#f4d24a" stroke="#9c7a15"/><path d="M4.500 1.500h9v9h-9z" fill="#8fe6ec" stroke="#4a929a"/>`
      : svg`<path d="M1 3l2-2h11v10l-3 3H1z" fill="#8fe6ec" stroke="#5a8a90"/><path d="M11 4l3-3v10l-3 3z" fill="#3f8d96"/><path d="M1 4l2-3h11l-3 3z" fill="#c9f6f8"/>`}</svg>`;
  }

  render() {
    return html`
      <header class="title">
        <svg class="app" viewBox="0 0 16 16" aria-hidden="true"><path d="M1 3l3-2h11v11l-3 3H1z" fill="#d9e9d2" stroke="#345"/><path d="M5 3h8v8H5z" fill="#55c9d6" stroke="#167"/></svg>
        <h1>TING_TONG (<span>活动的</span>) - Pro/ENGINEER</h1>
        <button class="win" aria-label="最小化"><svg viewBox="0 0 19 19"><path d="M4 14h7" stroke="#fff" stroke-width="3"/></svg></button>
        <button class="win" aria-label="还原"><svg viewBox="0 0 19 19"><path d="M4.500 9h7v5.500h-7zM7.500 8V4.500h7V11H12" stroke="#fff" stroke-width="1.500" fill="none"/></svg></button>
        <button class="win close" aria-label="关闭"><svg viewBox="0 0 19 19"><path d="M5 5l9 9M14 5l-9 9" stroke="#fff" stroke-width="2"/></svg></button>
        <div class="mark"><b>中国汽车工程师之家</b><i>www.cartech8.com</i></div>
      </header>
      <nav class="menu">${menus.map(([t, k]) => html`<button>${t}<span class="lat">(<u>${k}</u>)</span></button>`)}</nav>
      <div class="tools">
        ${topGroups.map((g, i) => html`<span class="handle"></span>${g.map((t) => this.tool(t))}${i === 2 ? html`<button class="drop" aria-label="选取选项"></button>` : ""}`)}
      </div>
      <main class="main">
        <section class="left">
          <div class="tabs">${["tree", "folders", "favorites", "utils"].map((n, i) => html`<button class=${classMap({ tab: true, on: i === 0 })} aria-label=${n}><tool-icon name=${n}></tool-icon></button>`)}</div>
          <div class="panel">
            <div class="pills">
              <button class="pill">显示<span class="lat">(<u>O</u>)</span></button>
              <button class="pill">设置<span class="lat">(<u>G</u>)</span></button>
            </div>
            <div class="tree">
              <div class="head"></div>
              <ul>
                <li>${this.part(true)}<span class="lat">TING_TONG.ASM</span></li>
                <li class="kid">${this.part(false)}<span class="lat">B_1.PRT</span></li>
                <li class="kid last">${this.part(false)}<span class="lat">T_1.PRT</span></li>
              </ul>
            </div>
          </div>
        </section>
        <div class="sash">${[0, 1].map(() => html`<button class="grip" aria-label="折叠"><svg viewBox="0 0 6 20"><path d="M5 1L2 4l3 3M5 12l-3 3 3 3" fill="none" stroke="#10108c" stroke-width="1.500"/></svg></button>`)}</div>
        <div class="split"><button aria-label="展开"><svg viewBox="0 0 6 105"><path d="M1 2l3 3-3 3M1 98l3 3-3 3" fill="none" stroke="#10108c" stroke-width="1.500"/><path d="M2.500 12v82" stroke="#223" stroke-dasharray="1 2"/></svg></button></div>
        <model-view></model-view>
        <aside class="side">
          ${sideGroups.map((g) => html`<div class="handle"></div>${g.map((t) => html`<div class="row">${this.tool(t)}${t[0] === "point" ? html`<button class="drop" aria-label="点选项"></button>` : ""}</div>`)}`)}
        </aside>
      </main>
      <section class="log">
        <ul>${messages.map((m) => html`<li>${m}</li>`)}</ul>
        <div class="bar">
          <button aria-label="向上"><tool-icon name="up"></tool-icon></button>
          <button class="thumb" aria-label="滚动"></button>
          <button aria-label="向下"><tool-icon name="down"></tool-icon></button>
        </div>
      </section>
      <footer class="status">
        <div class="cell"></div>
        <div class="pick"><select aria-label="过滤器"><option>智能</option></select><span class="arrow"><tool-icon name="down"></tool-icon></span></div>
        <div class="light"><svg viewBox="0 0 13 20" aria-hidden="true"><path d="M4 1h4v4H4z" fill="#c98888" stroke="#755"/><path d="M4 15h4v4H4z" fill="#dff3df" stroke="#2a7a3a"/><circle cx="6" cy="10" r="4" fill="#f7e21c" stroke="#665c10"/></svg></div>
      </footer>
    `;
  }
}
